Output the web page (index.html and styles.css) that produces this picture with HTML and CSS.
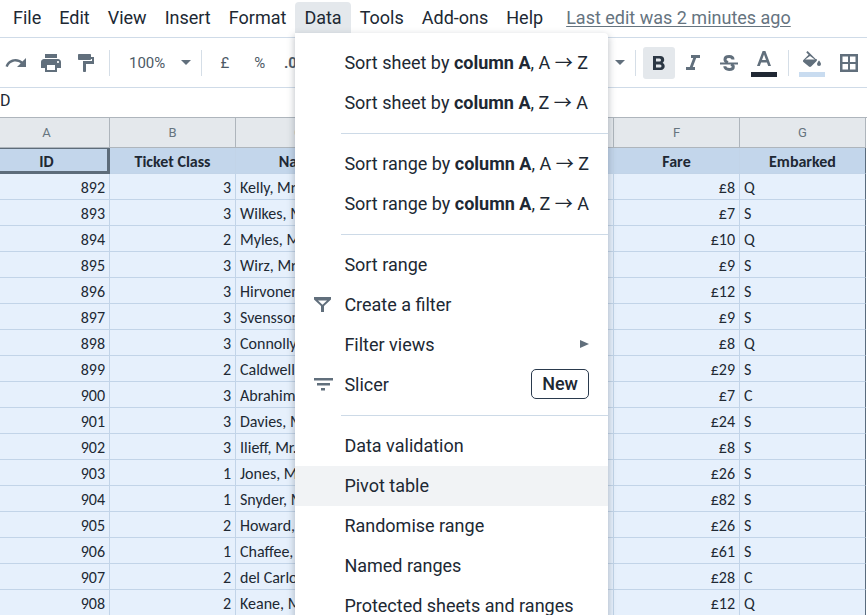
FILE: index.html
```html
<!DOCTYPE html>
<html lang="en-GB">
<head>
<meta charset="utf-8">
<title>Spreadsheet</title>
<link rel="stylesheet" href="styles.css">
</head>
<body>
<header>
<nav class="menubar" aria-label="Main menu">
<button>File</button><button>Edit</button><button>View</button><button>Insert</button><button>Format</button>
<div class="menu-anchor">
<button class="open" aria-haspopup="menu" aria-expanded="true">Data</button>
<div class="menu" role="menu">
<button role="menuitem"><span></span><span>Sort sheet by <b>column A</b>, A <span class="arrow">→</span> Z</span></button>
<button role="menuitem"><span></span><span>Sort sheet by <b>column A</b>, Z <span class="arrow">→</span> A</span></button>
<hr>
<button role="menuitem"><span></span><span>Sort range by <b>column A</b>, A <span class="arrow">→</span> Z</span></button>
<button role="menuitem"><span></span><span>Sort range by <b>column A</b>, Z <span class="arrow">→</span> A</span></button>
<hr>
<button role="menuitem"><span></span><span>Sort range</span></button>
<button role="menuitem"><svg width="20" height="18" viewBox="0 0 20 18"><path fill-rule="evenodd" d="M1 2h17v2.500l-7 6.500v6H8v-6L1 4.500zM5 5.500l4.500 4.200L14 5.500z"/></svg><span>Create a filter</span></button>
<button role="menuitem"><span></span><span>Filter views</span><svg class="sub" width="9" height="8" viewBox="0 0 9 8"><path d="M0 0l9 4-9 4z"/></svg></button>
<button role="menuitem"><svg width="20" height="18" viewBox="0 0 20 18"><path d="M1 3h19v2.500H1zM4 8h13v2.500H4zM8 13h4v2.500H8z"/></svg><span>Slicer</span><span class="badge">New</span></button>
<hr>
<button role="menuitem"><span></span><span>Data validation</span></button>
<button role="menuitem" class="hover"><span></span><span>Pivot table</span></button>
<button role="menuitem"><span></span><span>Randomise range</span></button>
<button role="menuitem"><span></span><span>Named ranges</span></button>
<button role="menuitem"><span></span><span>Protected sheets and ranges</span></button>
</div>
</div>
<button>Tools</button><button>Add-ons</button><button>Help</button>
<a class="last-edit" href="#">Last edit was 2 minutes ago</a>
</nav>
<div class="toolbar" role="toolbar" aria-label="Formatting">
<button class="tool" aria-label="Redo"><svg width="24" height="24" viewBox="0 0 24 24"><path d="M18.400 10.600C16.550 8.990 14.150 8 11.500 8c-4.650 0-8.580 3.030-9.960 7.220L3.900 16c1.050-3.190 4.050-5.500 7.600-5.500 1.950 0 3.730.720 5.120 1.880L13 16h9V7z"/></svg></button>
<button class="tool" aria-label="Print"><svg width="24" height="24" viewBox="0 0 24 24"><path fill-rule="evenodd" d="M19 8H5c-1.660 0-3 1.340-3 3v6h4v4h12v-4h4v-6c0-1.660-1.340-3-3-3zm-3 11H8v-5h8v5zm3-7c-.550 0-1-.450-1-1s.450-1 1-1 1 .450 1 1-.450 1-1 1zM18 3H6v4h12z"/></svg></button>
<button class="tool" aria-label="Paint format"><svg width="24" height="24" viewBox="0 0 24 24"><path d="M17 6V4c0-.550-.450-1-1-1H5c-.550 0-1 .450-1 1v4c0 .550.450 1 1 1h11c.550 0 1-.450 1-1h1v2H9v10c0 .550.450 1 1 1h1c.550 0 1-.450 1-1v-7h8V6z"/></svg></button>
<i class="divider"></i>
<button class="zoom">100%<svg width="10" height="5" viewBox="0 0 10 5"><path d="M0 0h10L5 5z"/></svg></button>
<i class="divider"></i>
<div class="formats"><button>£</button><button>%</button><button><b>.00</b></button></div>
<div class="styles">
<button class="caret" aria-label="Font size"><svg width="10" height="5" viewBox="0 0 10 5"><path d="M0 0h10L5 5z"/></svg></button>
<i class="divider"></i>
<button class="tool pressed" aria-label="Bold"><svg width="24" height="24" viewBox="0 0 24 24"><path fill-rule="evenodd" d="M15.600 11.800c1-.700 1.600-1.800 1.600-2.800a4 4 0 0 0-4-4H6v14h8c2.100 0 3.700-1.700 3.700-3.700 0-1.500-.800-2.800-2.100-3.500zM9 7.500h3.500a1.500 1.500 0 0 1 0 3H9v-3zm4 9H9v-3h4a1.500 1.500 0 0 1 0 3z"/></svg></button>
<button class="tool" aria-label="Italic"><svg width="24" height="24" viewBox="0 0 24 24"><path d="M9 4v3h2.210l-3.420 9H4v3h9v-3h-2.210l3.420-9H18V4z"/></svg></button>
<button class="tool" aria-label="Strikethrough"><svg width="24" height="24" viewBox="0 0 24 24"><path d="M3 11.500h18v2H3z"/><path class="line" d="M16 8.500C16 6.500 14.400 5.500 12.200 5.500S8 6.500 8 8.400c0 1.600 1.200 2.500 3 3M14 13.400c1.500.5 2.300 1.200 2.300 2.300 0 1.900-1.800 2.800-4.200 2.800-2.600 0-4.300-1.200-4.300-3.200"/></svg></button>
<button class="tool" aria-label="Text colour"><svg width="26" height="28" viewBox="0 0 26 28"><path fill-rule="evenodd" d="M11.600 2h2.800L20 17h-2.800l-1.300-3.500h-5.800L8.800 17H6zM11 11h4l-2-5.500z"/><path class="ink" d="M0 23h26v5H0z"/></svg></button>
<i class="divider"></i>
<button class="tool" aria-label="Fill colour"><svg width="26" height="28" viewBox="0 0 26 28"><path fill-rule="evenodd" d="M16.600 9.900L8.600 1.900 7.200 3.300l2.400 2.400-5.200 5.200c-.600.600-.600 1.500 0 2.100l5.500 4.500c.6.500 1.600.5 2.200 0l5.500-5.500c.5-.6.5-1.500-.100-2.100zM6.200 10.500L11 6.900l4.800 3.600z"/><path d="M20 11.500s-2 2.200-2 3.500a2 2 0 0 0 4 0c0-1.300-2-3.500-2-3.500z"/><path class="fill" d="M0 23h26v5H0z"/></svg></button>
<button class="tool" aria-label="Borders"><svg width="24" height="24" viewBox="0 0 24 24"><path fill-rule="evenodd" d="M5 3v18h18V3zm8 15.500H7.500V13H13zm0-7.500H7.500V5.500H13zm7.500 7.500H15V13h5.500zm0-7.500H15V5.500h5.500z"/></svg></button>
</div>
</div>
<div class="formula"><input aria-label="Formula" value="D"></div>
</header>
<main>
<table>
<colgroup><col><col><col><col><col><col><col></colgroup>
<thead>
<tr><th>A</th><th>B</th><th>C</th><th>D</th><th>E</th><th>F</th><th>G</th></tr>
</thead>
<tbody>
<tr class="titles"><th class="active">ID</th><th>Ticket Class</th><th>Name</th><th></th><th></th><th>Fare</th><th>Embarked</th></tr>
<tr><td>892</td><td>3</td><td>Kelly, Mr.</td><td></td><td></td><td>£8</td><td>Q</td></tr>
<tr><td>893</td><td>3</td><td>Wilkes, Mrs.</td><td></td><td></td><td>£7</td><td>S</td></tr>
<tr><td>894</td><td>2</td><td>Myles, Mr.</td><td></td><td></td><td>£10</td><td>Q</td></tr>
<tr><td>895</td><td>3</td><td>Wirz, Mr.</td><td></td><td></td><td>£9</td><td>S</td></tr>
<tr><td>896</td><td>3</td><td>Hirvonen</td><td></td><td></td><td>£12</td><td>S</td></tr>
<tr><td>897</td><td>3</td><td>Svensson</td><td></td><td></td><td>£9</td><td>S</td></tr>
<tr><td>898</td><td>3</td><td>Connolly</td><td></td><td></td><td>£8</td><td>Q</td></tr>
<tr><td>899</td><td>2</td><td>Caldwell</td><td></td><td></td><td>£29</td><td>S</td></tr>
<tr><td>900</td><td>3</td><td>Abrahim</td><td></td><td></td><td>£7</td><td>C</td></tr>
<tr><td>901</td><td>3</td><td>Davies, Mr.</td><td></td><td></td><td>£24</td><td>S</td></tr>
<tr><td>902</td><td>3</td><td>Ilieff, Mr.</td><td></td><td></td><td>£8</td><td>S</td></tr>
<tr><td>903</td><td>1</td><td>Jones, Mr.</td><td></td><td></td><td>£26</td><td>S</td></tr>
<tr><td>904</td><td>1</td><td>Snyder, Mrs.</td><td></td><td></td><td>£82</td><td>S</td></tr>
<tr><td>905</td><td>2</td><td>Howard,</td><td></td><td></td><td>£26</td><td>S</td></tr>
<tr><td>906</td><td>1</td><td>Chaffee,</td><td></td><td></td><td>£61</td><td>S</td></tr>
<tr><td>907</td><td>2</td><td>del Carlo</td><td></td><td></td><td>£28</td><td>C</td></tr>
<tr><td>908</td><td>2</td><td>Keane, Mr.</td><td></td><td></td><td>£12</td><td>Q</td></tr>
</tbody>
</table>
</main>
</body>
</html>
```
FILE: styles.css
```css
* { box-sizing: border-box; }
html, body { height: 100%; }
body {
  margin: 0;
  overflow: hidden;
  background: #fff;
  color: #202833;
  font-family: Roboto, sans-serif;
  font-size: 18px;
}
button {
  border: 0;
  padding: 0;
  background: none;
  color: inherit;
  font: inherit;
}
svg { fill: #616f7c; flex: none; }

.menubar {
  display: flex;
  align-items: flex-start;
  height: 38px;
  padding: 2px 4px 0;
  border-bottom: 1px solid #cfdbe8;
  white-space: nowrap;
}
.menubar > button, .open {
  height: 31px;
  padding: 0 9px;
  line-height: 31px;
}
.open {
  display: block;
  border-radius: 4px 4px 0 0;
  background: #e4e8ec;
}
.last-edit {
  margin-left: 14px;
  color: #66747f;
  line-height: 31px;
  text-underline-offset: 2px;
}

.menu-anchor { position: relative; }
.menu {
  position: absolute;
  z-index: 2;
  top: 31px;
  left: 0;
  padding: 10px 0;
  border-radius: 0 4px 4px 4px;
  background: #fff;
  box-shadow: 0 3px 7px 1px rgba(60, 70, 85, 0.3);
}
.menu button {
  display: grid;
  grid-template-columns: 31px 1fr auto;
  align-items: center;
  width: 100%;
  height: 40px;
  padding: 0 19px 2px 18px;
  text-align: left;
}
.menu hr {
  height: 1px;
  margin: 10px 0 10px 46px;
  border: 0;
  background: #cddae7;
}
.menu .hover { background: #f1f3f5; }
.arrow { font-family: "Noto Sans CJK SC", sans-serif; line-height: 1; }
.badge {
  padding: 0 10px;
  border: 1px solid #2a3a4d;
  border-radius: 5px;
  font-weight: 500;
  line-height: 28px;
}

.toolbar {
  display: flex;
  align-items: center;
  height: 50px;
  padding-left: 4px;
  border-bottom: 1px solid #cfdbe8;
  color: #4d5a66;
  font-size: 15px;
}
.tool {
  display: grid;
  place-items: center;
  width: 32px;
  height: 32px;
  border-radius: 3px;
}
.toolbar > .tool { width: 24px; margin-right: 11px; }
.pressed { background: #e4e8ec; }
.pressed svg { fill: #2b3744; }
.divider { width: 1px; height: 26px; background: #d5dee7; }
.zoom { display: flex; align-items: center; gap: 16px; padding: 0 10px 0 19px; }
.formats { display: flex; padding-left: 5px; }
.formats button { width: 35px; }
.styles { display: flex; align-items: center; gap: 3px; margin-left: auto; padding-right: 4px; }
.styles .divider { margin: 0 4px 0 5px; }
.caret { display: flex; padding: 0 2px; }
.line { fill: none; stroke: #616f7c; stroke-width: 3; }
.ink { fill: #202833; }
.fill { fill: #c9dcf0; }

.formula { height: 30px; border-bottom: 1px solid #aeb5bc; }
.formula input {
  width: 100%;
  height: 24px;
  padding: 0;
  border: 0;
  outline: 0;
  color: inherit;
  font: 16px Roboto, sans-serif;
}

table {
  width: 882px;
  margin-left: -16px;
  border-spacing: 0;
  table-layout: fixed;
  font: 16px/23px Carlito, Lato, sans-serif;
}
col { width: 126px; }
td, th {
  height: 26px;
  padding: 2px 4px 0;
  border-right: 1px solid #c2d4e8;
  border-bottom: 1px solid #c2d4e8;
  overflow: hidden;
  white-space: nowrap;
}
td { background: #e6f0fc; text-align: right; }
td:nth-child(3), td:last-child { text-align: left; }
td:last-child, .titles th:last-child { border-right-color: #596b7d; }
thead th {
  height: 30px;
  padding: 0;
  border-color: #aeb5bc;
  background: #e4e8ec;
  color: #66747f;
  font: 13px Roboto, sans-serif;
}
.titles th { background: #c3d6eb; }
.titles .active { box-shadow: inset -2px -2px #5d6c7a, inset 0 1px #5d6c7a; border-color: #5d6c7a; }
```
